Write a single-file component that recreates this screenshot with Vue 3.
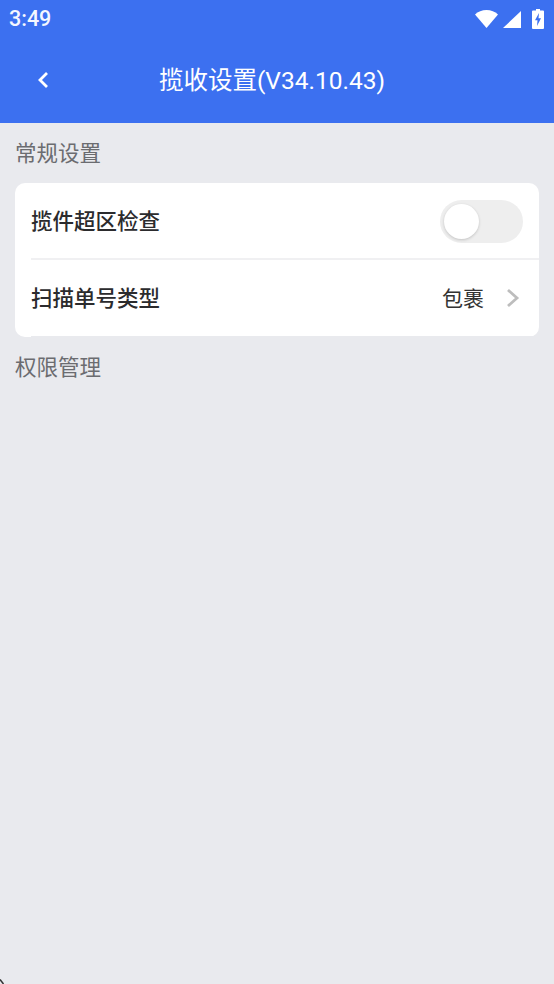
<script setup>
const rows = [
  { label: '揽件超区检查', toggle: true },
  { label: '扫描单号类型', value: '包裹' },
]
</script>

<template>
  <div class="page">
    <header class="head">
      <div class="status">
        <span class="time">3:49</span>
        <div class="icons">
          <svg width="23" height="18" viewBox="0 0 23 18"><path d="M0 4.500C3 1.700 7 0 11.500 0S20 1.700 23 4.500L11.500 18Z" fill="#fff"/></svg>
          <svg class="signal" width="18" height="17" viewBox="0 0 18 17"><path d="M18 0V17H0Z" fill="#fff"/></svg>
          <svg class="battery" width="12" height="20" viewBox="0 0 12 20"><path fill-rule="evenodd" d="M4 0h4v1.500h3a1 1 0 0 1 1 1V19a1 1 0 0 1-1 1H1a1 1 0 0 1-1-1V2.500a1 1 0 0 1 1-1h3ZM7 4 3 11.200h2.500L5 17l4-7.800H6.500Z" fill="#fff"/></svg>
        </div>
      </div>
      <div class="nav">
        <svg class="back" width="14" height="20" viewBox="0 0 14 20"><path d="M11 3 4 10l7 7" fill="none" stroke="#fff" stroke-width="2.800"/></svg>
        <span class="title">揽收设置(V34.10.43)</span>
      </div>
    </header>

    <div class="section">常规设置</div>
    <div class="card">
      <div v-for="row in rows" :key="row.label" class="row">
        <span class="label">{{ row.label }}</span>
        <span v-if="row.toggle" class="switch"><span class="knob"></span></span>
        <span v-else class="right">
          <span class="value">{{ row.value }}</span>
          <svg width="14" height="20" viewBox="0 0 14 20"><path d="M2 2l9 8-9 8" fill="none" stroke="#bdbdbd" stroke-width="2.800"/></svg>
        </span>
      </div>
    </div>
    <div class="section second">权限管理</div>
    <svg class="corner" width="6" height="6" viewBox="0 0 6 6"><path d="M0 1.500 3.500 6" fill="none" stroke="#333" stroke-width="1.500"/></svg>
  </div>
</template>

<style>
html, body { margin: 0; background: #e9eaee; }
</style>

<style scoped>
.page {
  width: 554px;
  height: 984px;
  overflow: hidden;
  position: relative;
  background: #e9eaee;
  font-family: "Noto Sans CJK SC", "Roboto", sans-serif;
}
.head { height: 123px; background: #3c70f0; color: #fff; }
.status {
  height: 38px;
  display: flex;
  align-items: center;
  justify-content: space-between;
  padding: 0 10px 0 9px;
}
.time { font: 500 21.500px/38px Roboto, sans-serif; color: #f4f7ff; }
.icons { display: flex; align-items: center; gap: 5px; }
.battery { margin-left: 6px; }
.nav { height: 85px; display: flex; align-items: center; position: relative; justify-content: center; }
.nav .title { font-size: 24.500px; font-family: Roboto, "Noto Sans CJK SC", sans-serif; margin: -5px 10px 0 0; }
.back { position: absolute; left: 36px; top: 32px; }
.section {
  height: 60px;
  padding-left: 15px;
  line-height: 58px;
  font-size: 21.500px;
  color: #6b6c70;
}
.card {
  margin: 0 15px;
  background: #fff;
  border-radius: 10px;
  padding-left: 16px;
}
.row {
  height: 76px;
  display: flex;
  align-items: center;
  justify-content: space-between;
  padding-right: 16px;
  border-bottom: 1px solid #e9eaee;
}
.row:first-child { height: 75px; border-bottom: 2px solid #f0f0f2; }
.label { font-size: 21.500px; font-weight: 500; color: #2b2b2d; padding-bottom: 3px; }
.switch {
  width: 83px;
  height: 43px;
  margin-top: 2px;
  border-radius: 22px;
  background: #eeeeee;
  display: block;
  position: relative;
}
.knob {
  position: absolute;
  left: 4px;
  top: 4px;
  width: 35px;
  height: 35px;
  border-radius: 50%;
  background: #fff;
  box-shadow: 0 1px 3px rgba(0, 0, 0, .18);
}
.right { display: flex; align-items: center; gap: 22px; margin-right: 3px; }
.value { font-size: 21px; color: #333; padding-bottom: 3px; }
.second { height: 61px; }
.corner { position: absolute; left: 0; bottom: 0; }
</style>
